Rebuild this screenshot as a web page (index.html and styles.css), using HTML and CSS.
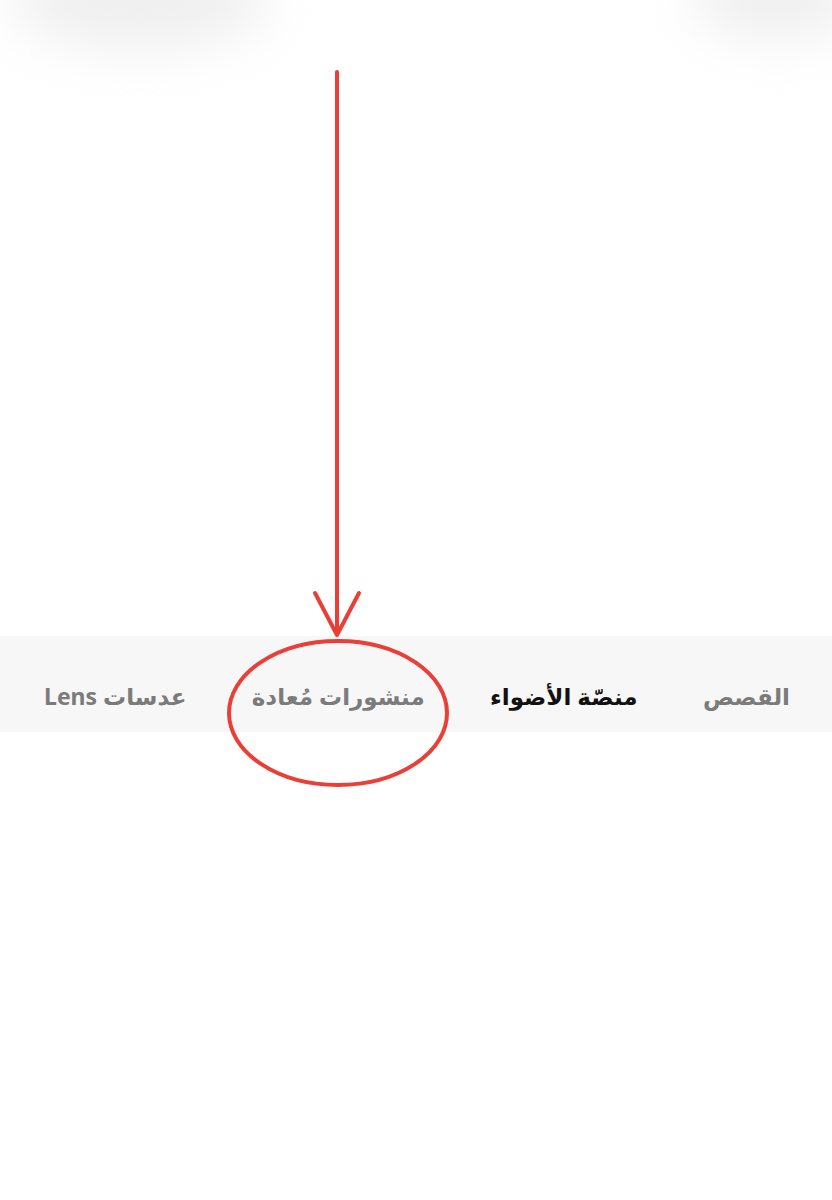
FILE: index.html
```html
<!DOCTYPE html>
<html lang="ar" dir="rtl">
<head>
<meta charset="utf-8">
<title>Tabs</title>
<link rel="stylesheet" href="styles.css">
</head>
<body>
<div class="page">
  <header class="top">
    <div class="blob blob-left"></div>
    <div class="blob blob-right"></div>
  </header>
  <nav class="tabs">
    <span class="tab">القصص</span>
    <span class="tab tab-active">منصّة الأضواء</span>
    <span class="tab">منشورات مُعادة</span>
    <span class="tab">عدسات Lens</span>
  </nav>
  <div class="rest"></div>
  <svg class="annotation" width="832" height="1200" viewBox="0 0 832 1200" aria-hidden="true">
    <g fill="none" stroke="#ea3f37" stroke-width="4" stroke-linecap="round" stroke-linejoin="round">
      <line x1="337" y1="72" x2="337" y2="634"/>
      <polyline points="315,593 337,635 359,593"/>
      <ellipse cx="338" cy="713" rx="109" ry="72"/>
    </g>
  </svg>
</div>
</body>
</html>
```
FILE: styles.css
```css
html, body {
  margin: 0;
  padding: 0;
  background: #ffffff;
}
.page {
  position: relative;
  width: 832px;
  height: 1200px;
  overflow: hidden;
  font-family: "Noto Sans", "DejaVu Sans", sans-serif;
}
.top {
  position: relative;
  height: 636px;
}
.blob {
  position: absolute;
  background: #efefef;
  border-radius: 50%;
  filter: blur(26px);
}
.blob-left {
  left: 10px;
  top: -50px;
  width: 260px;
  height: 100px;
}
.blob-right {
  right: -30px;
  top: -50px;
  width: 170px;
  height: 90px;
}
.tabs {
  height: 96px;
  background: #f7f7f7;
  display: flex;
  align-items: center;
  justify-content: space-between;
  padding: 24px 42px 0 44px;
  box-sizing: border-box;
}
.tab {
  font-size: 23px;
  font-weight: bold;
  color: #7b7b7b;
  white-space: nowrap;
}
.tab-active {
  color: #111111;
}
.annotation {
  position: absolute;
  left: 0;
  top: 0;
  pointer-events: none;
}
```
